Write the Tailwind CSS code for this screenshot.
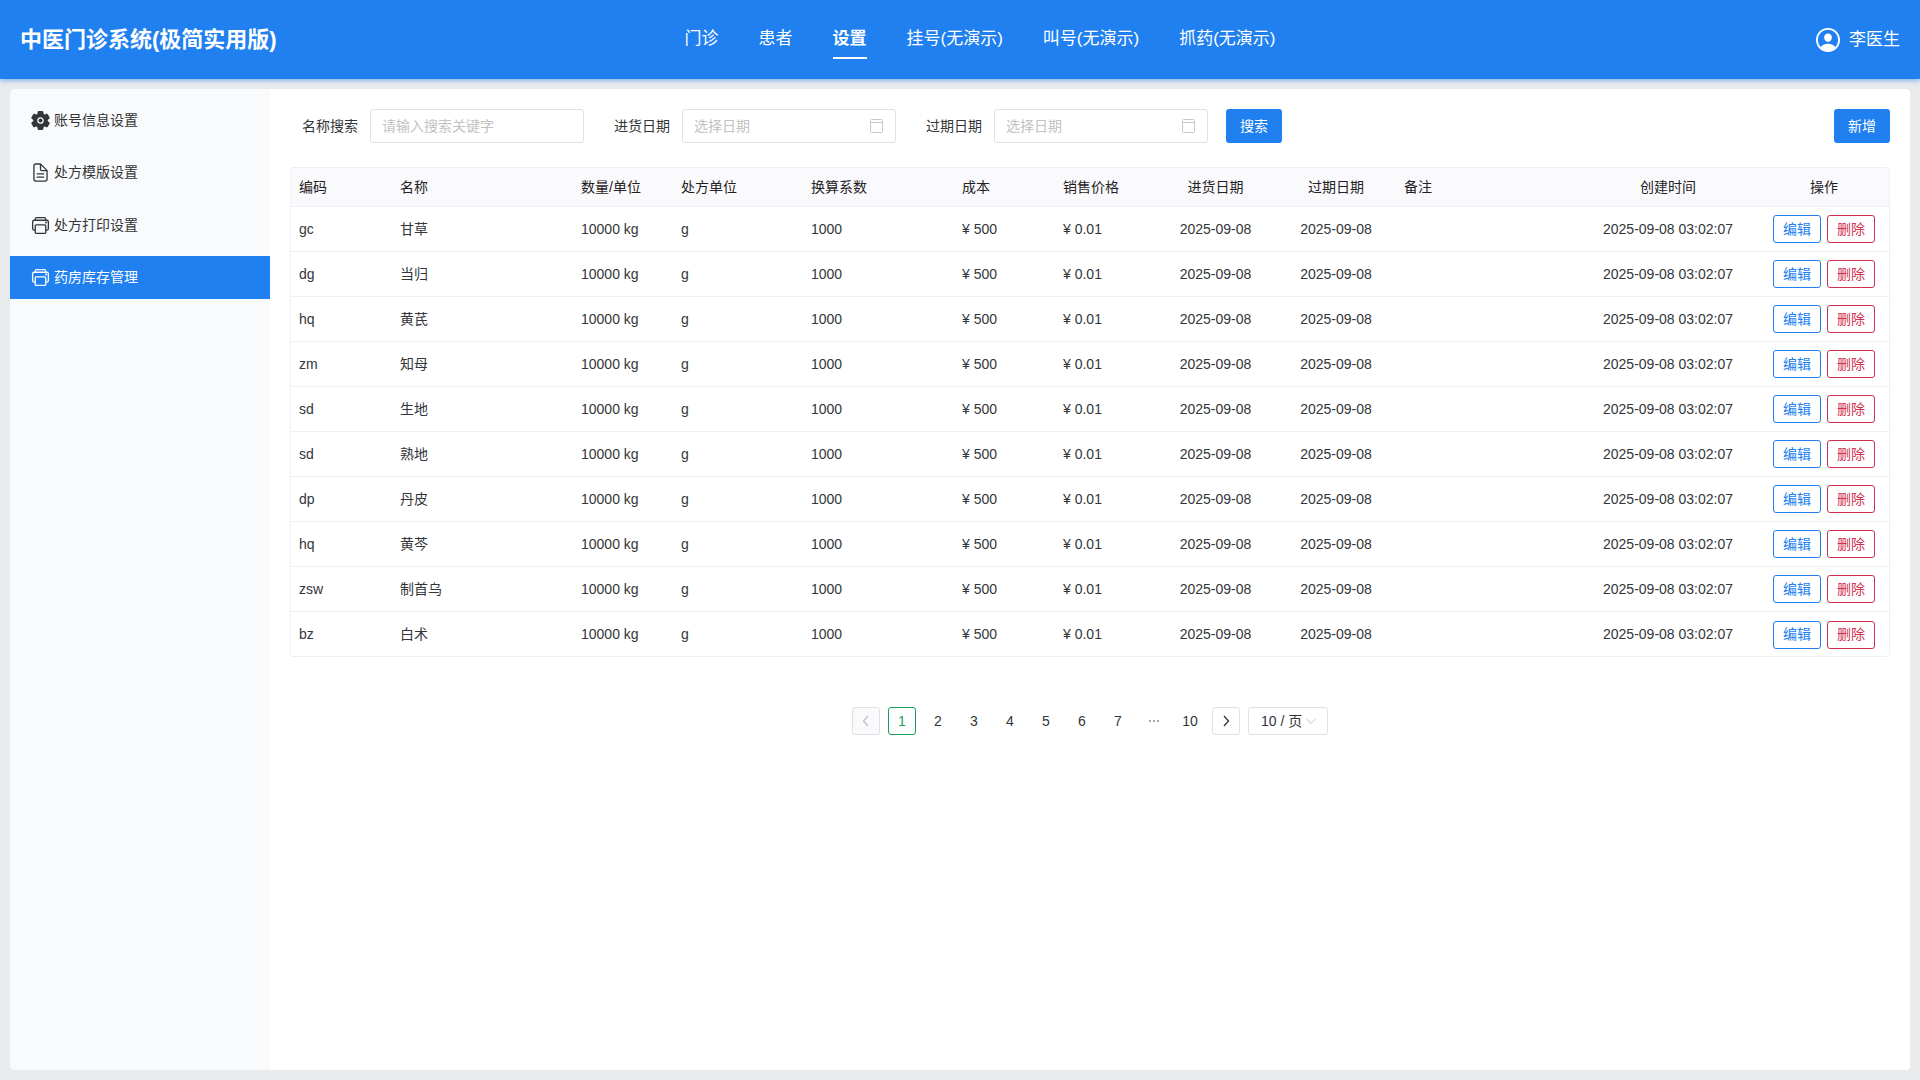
<!DOCTYPE html>
<html lang="zh">
<head>
<meta charset="utf-8">
<script src="https://cdn.jsdelivr.net/npm/@tailwindcss/browser@4"></script>
<title>中医门诊系统</title>
</head>
<body class="h-[1080px] w-[1920px] overflow-hidden bg-[#e9eaec] font-['Liberation_Sans','Noto_Sans_CJK_SC',sans-serif] text-[14px] text-[#333639]">
<header class="relative flex h-[79px] items-center justify-between bg-[#2080f0] pl-[20px] pr-[20px] text-white shadow-[0_2px_4px_rgba(32,128,240,0.45)]">
  <div class="w-[256px] whitespace-nowrap text-[22px] font-bold">中医门诊系统(极简实用版)</div>
  <nav class="mr-[132px] flex h-[79px] items-center gap-[40px] pb-[2px] text-[17px]">
    <a class="py-[8px]">门诊</a>
    <a class="py-[8px]">患者</a>
    <a class="relative py-[8px] font-bold after:absolute after:right-0 after:bottom-0 after:left-0 after:h-[2px] after:bg-white after:content-['']">设置</a>
    <a class="py-[8px]">挂号(无演示)</a>
    <a class="py-[8px]">叫号(无演示)</a>
    <a class="py-[8px]">抓药(无演示)</a>
  </nav>
  <div class="flex items-center gap-[9px] text-[17px]">
    <svg class="h-[24px] w-[24px]" viewBox="48 48 416 416" fill="currentColor"><path d="M258.9 48C141.92 46.42 46.42 141.92 48 258.9c1.56 112.19 92.91 203.54 205.1 205.1 117 1.6 212.48-93.9 210.88-210.88C462.44 140.91 371.09 49.56 258.9 48zm126.42 327.25a4 4 0 01-6.14-.32 124.27 124.27 0 00-32.35-29.59C321.37 329 289.11 320 256 320s-65.37 9-90.83 25.34a124.24 124.24 0 00-32.35 29.58 4 4 0 01-6.14.32A175.32 175.32 0 0180 259c-1.63-97.31 78.22-178.76 175.57-179S432 158.81 432 256a175.32 175.32 0 01-46.68 119.25z"/><path d="M256 144c-19.72 0-37.55 7.39-50.22 20.82s-19 32-17.57 51.93C191.11 256 221.52 288 256 288s64.83-32 67.79-71.25c1.48-19.74-4.8-38.14-17.68-51.82C293.39 151.44 275.59 144 256 144z"/></svg>
    <span>李医生</span>
  </div>
</header>

<div class="flex h-[981px] px-[10px] pt-[10px] pb-0">
  <aside class="flex h-[981px] w-[260px] flex-col gap-[9.5px] rounded-l-[4px] bg-[#f9fafc] pt-[9.5px]">
    <a class="flex h-[43px] items-center gap-[3px] pl-[20px]">
      <svg class="h-[21px] w-[21px] text-[#333639]" viewBox="0 0 512 512" fill="currentColor"><circle cx="256" cy="256" r="48"/><path d="M470.39 300l-.47-.38-31.56-24.75a16.11 16.11 0 0 1-6.1-13.33v-11.56a16 16 0 0 1 6.11-13.22L469.92 212l.47-.38a26.68 26.68 0 0 0 5.9-34.06l-42.71-73.9a1.59 1.59 0 0 1-.13-.22A26.86 26.86 0 0 0 401 92.14l-.35.13-37.1 14.93a15.94 15.94 0 0 1-14.47-1.29q-4.92-3.1-10-5.86a15.94 15.94 0 0 1-8.19-11.82l-5.59-39.59-.12-.72A27.22 27.22 0 0 0 298.76 26h-85.52a26.92 26.92 0 0 0-26.45 22.39l-.09.56-5.57 39.67a16 16 0 0 1-8.13 11.82 175.21 175.21 0 0 0-10 5.82 15.92 15.92 0 0 1-14.43 1.27l-37.13-15-.35-.14a26.87 26.87 0 0 0-32.48 11.34l-.13.22-42.77 73.95a26.71 26.71 0 0 0 5.9 34.1l.47.38 31.56 24.75a16.11 16.11 0 0 1 6.1 13.33v11.56a16 16 0 0 1-6.11 13.22L42.08 300l-.47.38a26.68 26.68 0 0 0-5.9 34.06l42.71 73.9a1.59 1.59 0 0 1 .13.22 26.86 26.86 0 0 0 32.45 11.3l.35-.13 37.07-14.93a15.94 15.94 0 0 1 14.47 1.29q4.92 3.11 10 5.86a15.94 15.94 0 0 1 8.19 11.82l5.56 39.59.12.72A27.22 27.22 0 0 0 213.24 486h85.52a26.92 26.92 0 0 0 26.45-22.39l.09-.56 5.57-39.67a16 16 0 0 1 8.18-11.82c3.42-1.84 6.76-3.79 10-5.82a15.92 15.92 0 0 1 14.43-1.27l37.13 14.95.35.14a26.85 26.85 0 0 0 32.48-11.34 2.53 2.53 0 0 1 .13-.22l42.71-73.89a26.7 26.7 0 0 0-5.89-34.06zm-134.48-40.24a80 80 0 1 1-83.66-83.67 80.21 80.21 0 0 1 83.66 83.67z"/></svg>
      <span>账号信息设置</span>
    </a>
    <a class="flex h-[43px] items-center gap-[3px] pl-[20px]">
      <svg class="h-[21px] w-[21px]" viewBox="0 0 512 512" fill="none" stroke="currentColor" stroke-width="32" stroke-linecap="round" stroke-linejoin="round"><path d="M416 221.25V416a48 48 0 01-48 48H144a48 48 0 01-48-48V96a48 48 0 0148-48h98.75a32 32 0 0122.62 9.37l141.26 141.26a32 32 0 019.37 22.62z"/><path d="M256 56v120a32 32 0 0032 32h120M176 288h160M176 368h160"/></svg>
      <span>处方模版设置</span>
    </a>
    <a class="flex h-[43px] items-center gap-[3px] pl-[20px]">
      <svg class="h-[21px] w-[21px]" viewBox="0 0 512 512" fill="none" stroke="currentColor" stroke-width="32" stroke-linejoin="round"><path d="M384 368h24a40.12 40.12 0 0040-40V168a40.12 40.12 0 00-40-40H104a40.12 40.12 0 00-40 40v160a40.12 40.12 0 0040 40h24"/><rect x="128" y="240" width="256" height="208" rx="24.32" ry="24.32"/><path d="M384 128v-24a40.12 40.12 0 00-40-40H168a40.12 40.12 0 00-40 40v24"/><circle cx="392" cy="184" r="24" fill="currentColor" stroke="none"/></svg>
      <span>处方打印设置</span>
    </a>
    <a class="flex h-[43px] items-center gap-[3px] bg-[#2080f0] pl-[20px] text-white">
      <svg class="h-[21px] w-[21px]" viewBox="0 0 512 512" fill="none" stroke="currentColor" stroke-width="32" stroke-linejoin="round"><path d="M384 368h24a40.12 40.12 0 0040-40V168a40.12 40.12 0 00-40-40H104a40.12 40.12 0 00-40 40v160a40.12 40.12 0 0040 40h24"/><rect x="128" y="240" width="256" height="208" rx="24.32" ry="24.32"/><path d="M384 128v-24a40.12 40.12 0 00-40-40H168a40.12 40.12 0 00-40 40v24"/><circle cx="392" cy="184" r="24" fill="currentColor" stroke="none"/></svg>
      <span>药房库存管理</span>
    </a>
  </aside>

  <main class="h-[981px] w-[1640px] rounded-r-[4px] bg-white px-[20px] pt-[20px]">
    <form class="flex h-[34px] items-center pl-[12px]">
      <label class="mr-[12px]">名称搜索</label>
      <div class="flex h-[34px] w-[214px] items-center rounded-[3px] border border-[#e0e0e6] px-[11px] text-[#c2c2c2]">请输入搜索关键字</div>
      <label class="mr-[12px] ml-[30px]">进货日期</label>
      <div class="flex h-[34px] w-[214px] items-center justify-between rounded-[3px] border border-[#e0e0e6] pr-[12px] pl-[11px] text-[#c2c2c2]">
        <span>选择日期</span>
        <svg class="h-[14px] w-[13px]" viewBox="0 0 13 14" fill="none" stroke="#c8c8c8"><rect x="0.5" y="0.5" width="12" height="13" rx="1"/><path d="M0.5 3.5h12"/></svg>
      </div>
      <label class="mr-[12px] ml-[30px]">过期日期</label>
      <div class="flex h-[34px] w-[214px] items-center justify-between rounded-[3px] border border-[#e0e0e6] pr-[12px] pl-[11px] text-[#c2c2c2]">
        <span>选择日期</span>
        <svg class="h-[14px] w-[13px]" viewBox="0 0 13 14" fill="none" stroke="#c8c8c8"><rect x="0.5" y="0.5" width="12" height="13" rx="1"/><path d="M0.5 3.5h12"/></svg>
      </div>
      <button type="button" class="ml-[18px] h-[34px] w-[56px] rounded-[3px] bg-[#2080f0] text-white">搜索</button>
      <button type="button" class="ml-auto h-[34px] w-[56px] rounded-[3px] bg-[#2080f0] text-white">新增</button>
    </form>

    <div class="mt-[24px] h-[490px] overflow-hidden rounded-[3px] border border-[#efeff5]">
      <table class="w-full table-fixed border-separate border-spacing-0">
        <colgroup>
          <col class="w-[101px]"><col class="w-[181px]"><col class="w-[100px]"><col class="w-[130px]"><col class="w-[151px]"><col class="w-[101px]"><col class="w-[100px]"><col class="w-[121px]"><col class="w-[120px]"><col class="w-[181px]"><col class="w-[182px]"><col class="w-[130px]">
        </colgroup>
        <thead class="bg-[#fafafc] text-[#1f2225]">
          <tr class="h-[39px] [&>th]:border-b [&>th]:border-[#efeff5] [&>th]:px-[8px] [&>th]:font-normal">
            <th class="text-left">编码</th><th class="text-left">名称</th><th class="text-left">数量/单位</th><th class="text-left">处方单位</th><th class="text-left">换算系数</th><th class="text-left">成本</th><th class="text-left">销售价格</th><th class="text-center">进货日期</th><th class="text-center">过期日期</th><th class="text-left">备注</th><th class="text-center">创建时间</th><th class="text-center">操作</th>
          </tr>
        </thead>
        <tbody class="[&_td]:h-[45px] [&_td]:border-b [&_td]:border-[#efeff5] [&_td]:px-[8px] [&_tr:last-child_td]:border-b-0">
          <tr><td>gc</td><td>甘草</td><td>10000 kg</td><td>g</td><td>1000</td><td>¥ 500</td><td>¥ 0.01</td><td class="text-center">2025-09-08</td><td class="text-center">2025-09-08</td><td></td><td class="text-center">2025-09-08 03:02:07</td><td><div class="flex justify-center gap-[6px]"><button class="h-[28px] w-[48px] rounded-[3px] border border-[#2080f0] text-[#2080f0]">编辑</button><button class="h-[28px] w-[48px] rounded-[3px] border border-[#d03050] text-[#d03050]">删除</button></div></td></tr>
          <tr><td>dg</td><td>当归</td><td>10000 kg</td><td>g</td><td>1000</td><td>¥ 500</td><td>¥ 0.01</td><td class="text-center">2025-09-08</td><td class="text-center">2025-09-08</td><td></td><td class="text-center">2025-09-08 03:02:07</td><td><div class="flex justify-center gap-[6px]"><button class="h-[28px] w-[48px] rounded-[3px] border border-[#2080f0] text-[#2080f0]">编辑</button><button class="h-[28px] w-[48px] rounded-[3px] border border-[#d03050] text-[#d03050]">删除</button></div></td></tr>
          <tr><td>hq</td><td>黄芪</td><td>10000 kg</td><td>g</td><td>1000</td><td>¥ 500</td><td>¥ 0.01</td><td class="text-center">2025-09-08</td><td class="text-center">2025-09-08</td><td></td><td class="text-center">2025-09-08 03:02:07</td><td><div class="flex justify-center gap-[6px]"><button class="h-[28px] w-[48px] rounded-[3px] border border-[#2080f0] text-[#2080f0]">编辑</button><button class="h-[28px] w-[48px] rounded-[3px] border border-[#d03050] text-[#d03050]">删除</button></div></td></tr>
          <tr><td>zm</td><td>知母</td><td>10000 kg</td><td>g</td><td>1000</td><td>¥ 500</td><td>¥ 0.01</td><td class="text-center">2025-09-08</td><td class="text-center">2025-09-08</td><td></td><td class="text-center">2025-09-08 03:02:07</td><td><div class="flex justify-center gap-[6px]"><button class="h-[28px] w-[48px] rounded-[3px] border border-[#2080f0] text-[#2080f0]">编辑</button><button class="h-[28px] w-[48px] rounded-[3px] border border-[#d03050] text-[#d03050]">删除</button></div></td></tr>
          <tr><td>sd</td><td>生地</td><td>10000 kg</td><td>g</td><td>1000</td><td>¥ 500</td><td>¥ 0.01</td><td class="text-center">2025-09-08</td><td class="text-center">2025-09-08</td><td></td><td class="text-center">2025-09-08 03:02:07</td><td><div class="flex justify-center gap-[6px]"><button class="h-[28px] w-[48px] rounded-[3px] border border-[#2080f0] text-[#2080f0]">编辑</button><button class="h-[28px] w-[48px] rounded-[3px] border border-[#d03050] text-[#d03050]">删除</button></div></td></tr>
          <tr><td>sd</td><td>熟地</td><td>10000 kg</td><td>g</td><td>1000</td><td>¥ 500</td><td>¥ 0.01</td><td class="text-center">2025-09-08</td><td class="text-center">2025-09-08</td><td></td><td class="text-center">2025-09-08 03:02:07</td><td><div class="flex justify-center gap-[6px]"><button class="h-[28px] w-[48px] rounded-[3px] border border-[#2080f0] text-[#2080f0]">编辑</button><button class="h-[28px] w-[48px] rounded-[3px] border border-[#d03050] text-[#d03050]">删除</button></div></td></tr>
          <tr><td>dp</td><td>丹皮</td><td>10000 kg</td><td>g</td><td>1000</td><td>¥ 500</td><td>¥ 0.01</td><td class="text-center">2025-09-08</td><td class="text-center">2025-09-08</td><td></td><td class="text-center">2025-09-08 03:02:07</td><td><div class="flex justify-center gap-[6px]"><button class="h-[28px] w-[48px] rounded-[3px] border border-[#2080f0] text-[#2080f0]">编辑</button><button class="h-[28px] w-[48px] rounded-[3px] border border-[#d03050] text-[#d03050]">删除</button></div></td></tr>
          <tr><td>hq</td><td>黄芩</td><td>10000 kg</td><td>g</td><td>1000</td><td>¥ 500</td><td>¥ 0.01</td><td class="text-center">2025-09-08</td><td class="text-center">2025-09-08</td><td></td><td class="text-center">2025-09-08 03:02:07</td><td><div class="flex justify-center gap-[6px]"><button class="h-[28px] w-[48px] rounded-[3px] border border-[#2080f0] text-[#2080f0]">编辑</button><button class="h-[28px] w-[48px] rounded-[3px] border border-[#d03050] text-[#d03050]">删除</button></div></td></tr>
          <tr><td>zsw</td><td>制首乌</td><td>10000 kg</td><td>g</td><td>1000</td><td>¥ 500</td><td>¥ 0.01</td><td class="text-center">2025-09-08</td><td class="text-center">2025-09-08</td><td></td><td class="text-center">2025-09-08 03:02:07</td><td><div class="flex justify-center gap-[6px]"><button class="h-[28px] w-[48px] rounded-[3px] border border-[#2080f0] text-[#2080f0]">编辑</button><button class="h-[28px] w-[48px] rounded-[3px] border border-[#d03050] text-[#d03050]">删除</button></div></td></tr>
          <tr><td>bz</td><td>白术</td><td>10000 kg</td><td>g</td><td>1000</td><td>¥ 500</td><td>¥ 0.01</td><td class="text-center">2025-09-08</td><td class="text-center">2025-09-08</td><td></td><td class="text-center">2025-09-08 03:02:07</td><td><div class="flex justify-center gap-[6px]"><button class="h-[28px] w-[48px] rounded-[3px] border border-[#2080f0] text-[#2080f0]">编辑</button><button class="h-[28px] w-[48px] rounded-[3px] border border-[#d03050] text-[#d03050]">删除</button></div></td></tr>
        </tbody>
      </table>
    </div>

    <div class="mt-[50px] flex justify-center gap-[8px]">
      <div class="flex h-[28px] w-[28px] items-center justify-center rounded-[3px] border border-[#e0e0e6] bg-[#fafafc] text-[#c2c2c2]"><svg class="h-[14px] w-[14px]" viewBox="0 0 14 14" fill="none" stroke="currentColor" stroke-width="1.3"><path d="M9 2 4.5 7 9 12"/></svg></div>
      <div class="flex h-[28px] w-[28px] items-center justify-center rounded-[3px] border border-[#18a058] text-[#18a058]">1</div>
      <div class="flex h-[28px] w-[28px] items-center justify-center">2</div>
      <div class="flex h-[28px] w-[28px] items-center justify-center">3</div>
      <div class="flex h-[28px] w-[28px] items-center justify-center">4</div>
      <div class="flex h-[28px] w-[28px] items-center justify-center">5</div>
      <div class="flex h-[28px] w-[28px] items-center justify-center">6</div>
      <div class="flex h-[28px] w-[28px] items-center justify-center">7</div>
      <div class="flex h-[28px] w-[28px] items-center justify-center text-[#8a8a8a]"><svg class="h-[14px] w-[14px]" viewBox="0 0 14 14" fill="currentColor"><circle cx="3" cy="7" r="1"/><circle cx="7" cy="7" r="1"/><circle cx="11" cy="7" r="1"/></svg></div>
      <div class="flex h-[28px] w-[28px] items-center justify-center">10</div>
      <div class="flex h-[28px] w-[28px] items-center justify-center rounded-[3px] border border-[#e0e0e6]"><svg class="h-[14px] w-[14px]" viewBox="0 0 14 14" fill="none" stroke="currentColor" stroke-width="1.3"><path d="M5 2 9.5 7 5 12"/></svg></div>
      <div class="flex h-[28px] w-[80px] items-center justify-between rounded-[3px] border border-[#e0e0e6] pr-[11px] pl-[12px]"><span>10 / 页</span><svg class="h-[10px] w-[10px] text-[#c2c2c2]" viewBox="0 0 10 10" fill="none" stroke="currentColor"><path d="M0.5 3 5 7.5 9.5 3"/></svg></div>
    </div>
  </main>
</div>
</body>
</html>
